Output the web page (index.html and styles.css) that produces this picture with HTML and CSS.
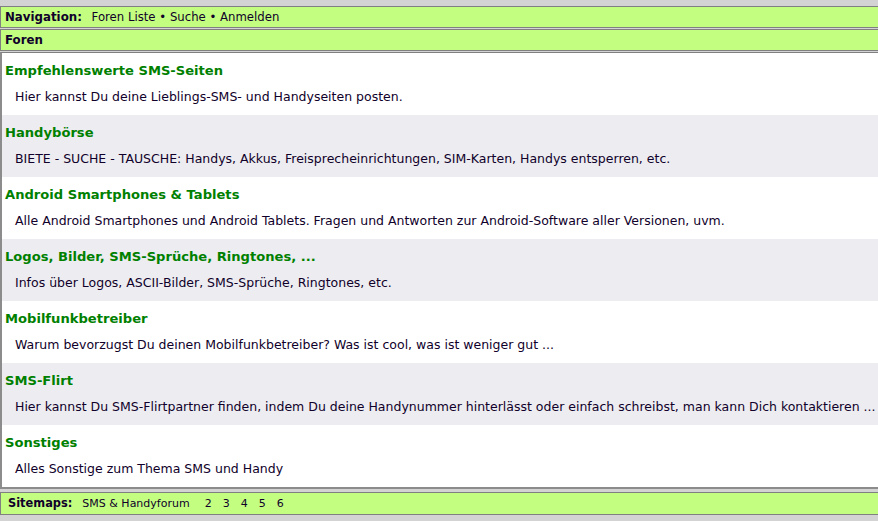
FILE: index.html
```html
<!DOCTYPE html>
<html lang="de">
<head>
    <meta charset="UTF-8">
    <title>SMS &amp; Handyforum</title>
    <link rel="stylesheet" href="styles.css">
</head>
<body>
    <div class="bar nav">
        <b>Navigation:</b>
        <a href="#">Foren Liste</a> &bull; <a href="#">Suche</a> &bull; <a href="#">Anmelden</a>
    </div>
    <div class="bar head"><b>Foren</b></div>

    <div class="forums">
        <div class="forum">
            <h2><a href="#">Empfehlenswerte SMS-Seiten</a></h2>
            <p>Hier kannst Du deine Lieblings-SMS- und Handyseiten posten.</p>
        </div>
        <div class="forum">
            <h2><a href="#">Handybörse</a></h2>
            <p>BIETE - SUCHE - TAUSCHE: Handys, Akkus, Freisprecheinrichtungen, SIM-Karten, Handys entsperren, etc.</p>
        </div>
        <div class="forum">
            <h2><a href="#">Android Smartphones &amp; Tablets</a></h2>
            <p>Alle Android Smartphones und Android Tablets. Fragen und Antworten zur Android-Software aller Versionen, uvm.</p>
        </div>
        <div class="forum">
            <h2><a href="#">Logos, Bilder, SMS-Sprüche, Ringtones, ...</a></h2>
            <p>Infos über Logos, ASCII-Bilder, SMS-Sprüche, Ringtones, etc.</p>
        </div>
        <div class="forum">
            <h2><a href="#">Mobilfunkbetreiber</a></h2>
            <p>Warum bevorzugst Du deinen Mobilfunkbetreiber? Was ist cool, was ist weniger gut ...</p>
        </div>
        <div class="forum">
            <h2><a href="#">SMS-Flirt</a></h2>
            <p>Hier kannst Du SMS-Flirtpartner finden, indem Du deine Handynummer hinterlässt oder einfach schreibst, man kann Dich kontaktieren ...</p>
        </div>
        <div class="forum">
            <h2><a href="#">Sonstiges</a></h2>
            <p>Alles Sonstige zum Thema SMS und Handy</p>
        </div>
    </div>

    <div class="bar sitemap">
        <b>Sitemaps:</b><a href="#" class="main">SMS &amp; Handyforum</a><a href="#">2</a><a href="#">3</a><a href="#">4</a><a href="#">5</a><a href="#">6</a>
    </div>
</body>
</html>
```

FILE: styles.css
```css
body {
    margin: 0;
    padding: 6px 0 0 0;
    background: #d3d3d3;
    font-family: "DejaVu Sans", Verdana, sans-serif;
    font-size: 12px;
    color: #10002a;
    overflow: hidden;
}

a {
    color: #10002a;
    text-decoration: none;
}

.bar {
    background: #c3fe80;
    border: 1px solid #808080;
    border-right: none;
    height: 20px;
    line-height: 20px;
    padding-left: 4px;
    font-size: 11.7px;
    white-space: nowrap;
    overflow: hidden;
}

.bar b {
    font-size: 11.8px;
    margin-right: 6px;
}

.head {
    margin-top: 1px;
}

.forums {
    margin-top: 1px;
    border: 1px solid #808080;
    border-left: 2px solid #8c8c8c;
    border-right: none;
    border-bottom: 2px solid #8c8c8c;
    background: #fff;
    overflow: hidden;
}

.forum {
    height: 62px;
    padding-left: 3px;
    overflow: hidden;
}

.forum:nth-child(even) {
    background: #ededf1;
}

.forum h2 {
    margin: 0;
    padding-top: 9px;
    height: 18px;
    line-height: 18px;
    font-size: 13.1px;
    font-weight: bold;
    white-space: nowrap;
}

.forum h2 a {
    color: #008000;
}

.forum p {
    margin: 9px 0 0 10px;
    line-height: 16px;
    font-size: 12.5px;
    white-space: nowrap;
}

.sitemap {
    margin-top: 3px;
    height: 21px;
    line-height: 21px;
    padding-left: 7px;
    font-size: 11px;
}

.sitemap b {
    font-size: 11.4px;
    margin-right: 10px;
}

.sitemap a {
    display: inline-block;
    width: 18px;
}

.sitemap a.main {
    width: auto;
    margin-right: 15px;
}
```
